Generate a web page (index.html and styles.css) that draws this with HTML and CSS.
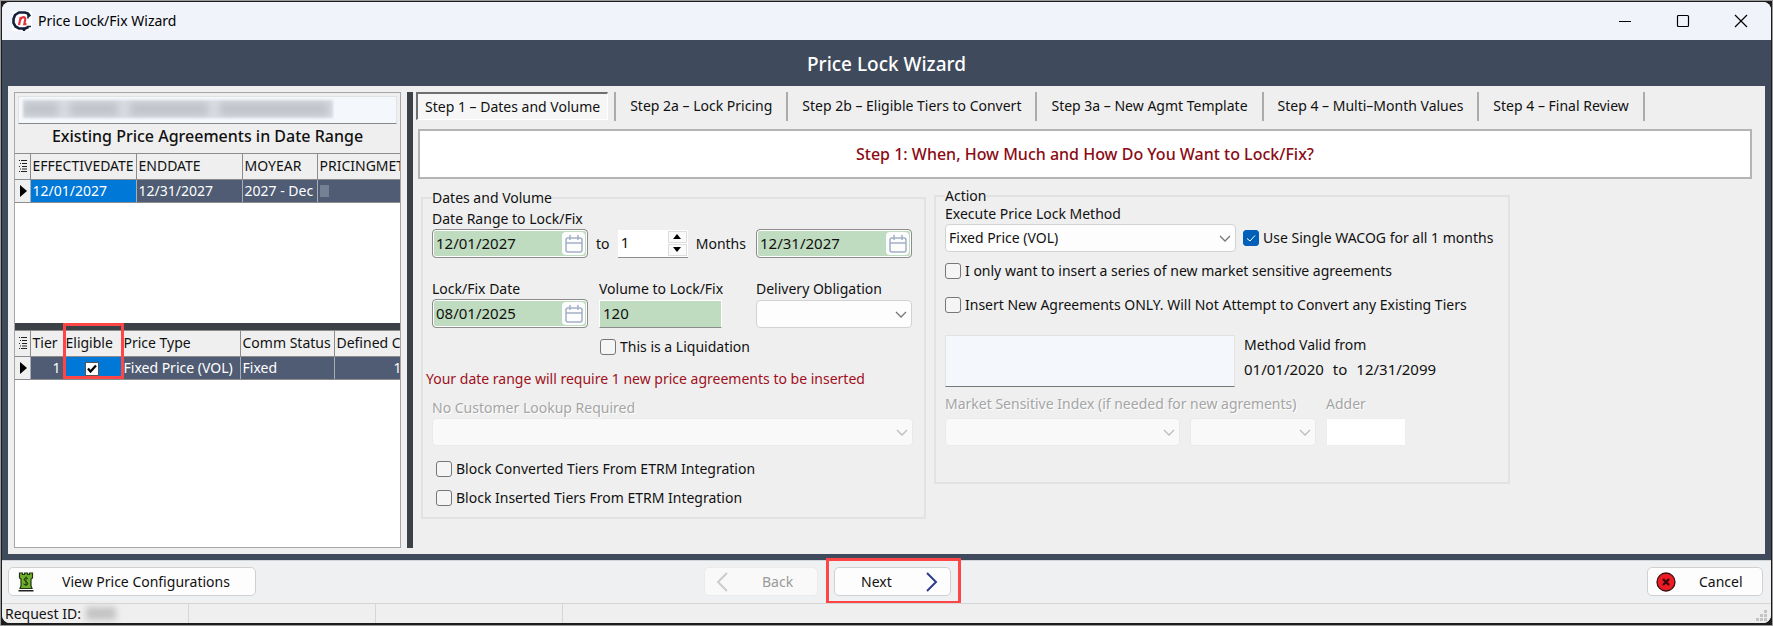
FILE: index.html
```html
<!DOCTYPE html>
<html lang="en">
<head>
<meta charset="utf-8">
<title>Price Lock/Fix Wizard</title>
<link rel="stylesheet" href="styles.css">
</head>
<body>
<div class="window">
  <header class="titlebar">
    <svg class="app-icon" viewBox="0 0 20 20" aria-hidden="true">
      <rect width="20" height="20" fill="#fff"/>
      <path d="M18 5.500L16 2.500L13 1.500H7L3 4L1.500 8V12L3.500 15.500L7 17.500H13L16.500 16" fill="none" stroke="#14203a" stroke-width="2.600"/>
      <path d="M16 3V7.500M15.500 15.500H19M10.500 17L12 20L13.500 17" fill="none" stroke="#14203a" stroke-width="1.600"/>
      <path d="M7 14L8.700 6M8 9Q9.500 6.200 11.800 6.200Q13.600 6.400 13.200 8.500L12.300 13.200H14.500" fill="none" stroke="#e0353c" stroke-width="2.200"/>
    </svg>
    <span class="titlebar-text">Price Lock/Fix Wizard</span>
    <div class="window-controls">
      <button type="button" aria-label="Minimize"><svg viewBox="0 0 12 12"><path d="M0 6.500H12"/></svg></button>
      <button type="button" aria-label="Maximize"><svg viewBox="0 0 12 12"><rect x=".5" y=".5" width="11" height="11" rx="1"/></svg></button>
      <button type="button" aria-label="Close"><svg viewBox="0 0 12 12"><path d="M0 0L12 12M12 0L0 12"/></svg></button>
    </div>
  </header>

  <h1 class="banner">Price Lock Wizard</h1>

  <main class="body">
    <aside class="side">
      <section class="side-top">
        <div class="customer" aria-label="Customer"><div class="redacted"><i></i><i></i><i></i><i></i></div></div>
        <h2>Existing Price Agreements in Date Range</h2>
        <div class="grid-clip">
          <table class="grid agreements">
            <colgroup><col class="c-mark"><col class="c-date"><col class="c-date"><col class="c-moyear"><col class="c-method"></colgroup>
            <thead><tr>
              <th><svg class="menu-icon" viewBox="0 0 8 12"><path d="M0 .5H1M2 .5H8M1 3.500H2M3 3.500H8M0 6.500H1M3 6.500H8M1 9H2M3 9H8M0 11.500H1M2 11.500H8"/></svg></th>
              <th>EFFECTIVEDATE</th><th>ENDDATE</th><th>MOYEAR</th><th>PRICINGMETHOD</th>
            </tr></thead>
            <tbody><tr>
              <td class="mark"><svg viewBox="0 0 7 12"><path d="M0 0L7 6L0 12Z"/></svg></td>
              <td class="focus">12/01/2027</td><td>12/31/2027</td><td>2027 - Dec</td><td><span class="smudge"></span></td>
            </tr></tbody>
          </table>
        </div>
      </section>
      <div class="split-h"></div>
      <section class="side-bottom">
        <div class="eligible-highlight"></div>
        <div class="grid-clip">
          <table class="grid tiers">
            <colgroup><col class="c-mark"><col class="c-tier"><col class="c-eligible"><col class="c-type"><col class="c-status"><col class="c-defined"></colgroup>
            <thead><tr>
              <th><svg class="menu-icon" viewBox="0 0 8 12"><path d="M0 .5H1M2 .5H8M1 3.500H2M3 3.500H8M0 6.500H1M3 6.500H8M1 9H2M3 9H8M0 11.500H1M2 11.500H8"/></svg></th>
              <th>Tier</th><th>Eligible</th><th>Price Type</th><th>Comm Status</th><th>Defined Commodity</th>
            </tr></thead>
            <tbody><tr>
              <td class="mark"><svg viewBox="0 0 7 12"><path d="M0 0L7 6L0 12Z"/></svg></td>
              <td class="num">1</td>
              <td class="focus center"><span class="tick"><input type="checkbox" checked aria-label="Eligible"><svg viewBox="0 0 12 12"><path d="M2 5.500L4.500 8.500L10 2.500"/></svg></span></td>
              <td>Fixed Price (VOL)</td><td>Fixed</td><td class="one">1</td>
            </tr></tbody>
          </table>
        </div>
      </section>
    </aside>
    <div class="split-v"></div>

    <section class="content">
      <nav class="tabs" role="tablist">
        <button type="button" role="tab" class="tab active" aria-selected="true">Step 1 – Dates and Volume</button>
        <button type="button" role="tab" class="tab">Step 2a – Lock Pricing</button>
        <button type="button" role="tab" class="tab">Step 2b – Eligible Tiers to Convert</button>
        <button type="button" role="tab" class="tab">Step 3a – New Agmt Template</button>
        <button type="button" role="tab" class="tab">Step 4 – Multi–Month Values</button>
        <button type="button" role="tab" class="tab">Step 4 – Final Review</button>
      </nav>
      <h2 class="step-title">Step 1: When, How Much and How Do You Want to Lock/Fix?</h2>

      <div class="groups">
        <fieldset class="group dates">
          <legend>Dates and Volume</legend>
          <div class="date-grid">
            <label class="lbl" for="from">Date Range to Lock/Fix</label>
            <div class="date at-from"><input id="from" value="12/01/2027"><button type="button" aria-label="Choose start date"><svg viewBox="0 0 18 18"><use href="#calendar"/></svg></button></div>
            <div class="range">
              <label for="months">to</label>
              <div class="spin"><input id="months" value="1"><div class="spin-buttons"><button type="button" aria-label="More"><svg viewBox="0 0 8 5"><path d="M0 5L4 0L8 5Z"/></svg></button><button type="button" aria-label="Fewer"><svg viewBox="0 0 8 5"><path d="M0 0L4 5L8 0Z"/></svg></button></div></div>
              <span>Months</span>
            </div>
            <div class="date"><input aria-label="End date" value="12/31/2027"><button type="button" aria-label="Choose end date"><svg viewBox="0 0 18 18"><use href="#calendar"/></svg></button></div>
          </div>
          <div class="lock-grid">
            <label class="lbl" for="lockdate">Lock/Fix Date</label>
            <label class="lbl" for="volume">Volume to Lock/Fix</label>
            <label class="lbl" for="delivery">Delivery Obligation</label>
            <div class="date"><input id="lockdate" value="08/01/2025"><button type="button" aria-label="Choose lock date"><svg viewBox="0 0 18 18"><use href="#calendar"/></svg></button></div>
            <input class="volume" id="volume" value="120">
            <div class="combo"><select id="delivery"><option></option></select><svg viewBox="0 0 10 6"><path d="M0 0L5 5L10 0"/></svg></div>
          </div>
          <label class="check liquidation"><input type="checkbox">This is a Liquidation</label>
          <p class="notice">Your date range will require 1 new price agreements to be inserted</p>
          <label class="lbl muted" for="lookup">No Customer Lookup Required</label>
          <div class="combo"><select id="lookup" disabled><option></option></select><svg viewBox="0 0 10 6"><path d="M0 0L5 5L10 0"/></svg></div>
          <div class="blocks">
            <label class="check"><input type="checkbox">Block Converted Tiers From ETRM Integration</label>
            <label class="check"><input type="checkbox">Block Inserted Tiers From ETRM Integration</label>
          </div>
        </fieldset>

        <fieldset class="group action">
          <legend>Action</legend>
          <label class="lbl" for="method">Execute Price Lock Method</label>
          <div class="method-row">
            <div class="combo"><select id="method"><option>Fixed Price (VOL)</option></select><svg viewBox="0 0 10 6"><path d="M0 0L5 5L10 0"/></svg></div>
            <label class="check"><input type="checkbox" checked>Use Single WACOG for all 1 months</label>
          </div>
          <div class="options">
            <label class="check"><input type="checkbox">I only want to insert a series of new market sensitive agreements</label>
            <label class="check"><input type="checkbox">Insert New Agreements ONLY. Will Not Attempt to Convert any Existing Tiers</label>
          </div>
          <div class="memo-row">
            <textarea aria-label="Method description"></textarea>
            <div class="valid"><span>Method Valid from</span><div class="valid-dates"><span>01/01/2020</span><span>to</span><span>12/31/2099</span></div></div>
          </div>
          <div class="index-grid">
            <label class="lbl muted wide" for="index">Market Sensitive Index (if needed for new agrements)</label>
            <label class="lbl muted" for="adder">Adder</label>
            <div class="combo"><select id="index" disabled><option></option></select><svg viewBox="0 0 10 6"><path d="M0 0L5 5L10 0"/></svg></div>
            <div class="combo"><select aria-label="Index period" disabled><option></option></select><svg viewBox="0 0 10 6"><path d="M0 0L5 5L10 0"/></svg></div>
            <input class="adder" id="adder" disabled>
          </div>
        </fieldset>
      </div>
    </section>
  </main>

  <footer class="actions">
    <div class="start">
      <button type="button" class="btn view">
        <svg viewBox="0 0 16 20" aria-hidden="true"><path d="M1.500 1H4.500V2.500H6.500V1H9.500V2.500H11.500V1H14.500V6L13 7V14L14 16.500H2L3 14V7L1.500 6Z" fill="#6fae2c" stroke="#20340f" stroke-width="1.200"/><path d="M10 6.500Q8 5 6.500 6.500T8 9.500T9.500 12.500T5.500 12M8 4.500V14" fill="none" stroke="#20340f"/><path d="M.5 18.800H15.500" stroke="#222" stroke-width="1.400"/></svg>
        <span>View Price Configurations</span>
      </button>
    </div>
    <div class="nav">
      <button type="button" class="btn back" disabled><svg viewBox="0 0 12 20" aria-hidden="true"><path d="M11 1L2 10L11 19"/></svg><span>Back</span></button>
      <div class="next-wrap">
        <button type="button" class="btn next"><span>Next</span><svg viewBox="0 0 12 20" aria-hidden="true"><path d="M1 1L10 10L1 19"/></svg></button>
        <div class="next-highlight"></div>
      </div>
    </div>
    <button type="button" class="btn cancel">
      <svg viewBox="0 0 20 20" aria-hidden="true"><circle cx="10" cy="10" r="9" fill="#ed1c24" stroke="#3a0f12" stroke-width="1.300"/><path d="M7 7L13 13M13 7L7 13" stroke="#3a0508" stroke-width="2.400"/></svg>
      <span>Cancel</span>
    </button>
  </footer>

  <div class="status">
    <div class="cell">Request ID: <span class="redacted-id"></span></div><div class="cell"></div><div class="cell"></div><div class="cell last"></div>
    <svg class="grip" viewBox="0 0 11 11" aria-hidden="true"><path d="M8 0h3v3h-3zM4 4h3v3h-3zM8 4h3v3h-3zM0 8h3v3h-3zM4 8h3v3h-3zM8 8h3v3h-3z"/></svg>
  </div>
</div>

<svg class="defs" aria-hidden="true">
  <symbol id="calendar" viewBox="0 0 18 18"><rect x="1" y="3" width="16" height="14" rx="2"/><path d="M1 8H17M5 0V5M13 0V5"/></symbol>
</svg>
</body>
</html>
```
FILE: styles.css
```css
* { box-sizing: border-box; }

body {
  margin: 0;
  min-height: 100vh;
  display: flex;
  padding: 1px 1px 2px;
  border: 1px solid #9a9a9a;
  background: #1c1c1c;
  font: 14px/16px "Noto Sans", "Open Sans", sans-serif;
  color: #111;
}

button, input, select, textarea { font: inherit; color: inherit; margin: 0; }

.defs { position: absolute; width: 0; height: 0; }

.window {
  flex: 1;
  min-width: 0;
  display: flex;
  flex-direction: column;
  border-radius: 8px;
  overflow: hidden;
  background: #eff0f2;
}

.titlebar {
  display: flex;
  align-items: center;
  height: 38px;
  padding: 0 1px 0 10px;
  background: #f0f3fa;
}
.app-icon { width: 20px; height: 20px; margin-right: 6px; }
.titlebar-text { line-height: 20px; color: #000; }
.window-controls { display: flex; margin-left: auto; }
.window-controls button {
  width: 58px;
  height: 38px;
  padding: 0;
  border: 0;
  background: none;
  display: flex;
  align-items: center;
  justify-content: center;
}
.window-controls svg { width: 12px; height: 12px; fill: none; stroke: #000; stroke-width: 1.2; overflow: visible; }

.banner {
  margin: 0;
  padding: 12px 0 10px;
  background: #3f4a5c;
  color: #fff;
  text-align: center;
  font-size: 19px;
  line-height: 24px;
  font-weight: 500;
}

.body {
  flex: 1;
  display: flex;
  padding: 6px;
  border: 6px solid #3f4a5c;
  border-top: 0;
  background: #efefef;
}

.side {
  flex: 0 0 387px;
  min-width: 0;
  margin-right: 6px;
  display: flex;
  flex-direction: column;
  border: 1px solid #a6a6a6;
}
.side-top { flex: 0 0 230px; display: flex; flex-direction: column; background: #efefef; }
.side-bottom { flex: 1; position: relative; display: flex; flex-direction: column; }
.customer {
  height: 28px;
  margin: 3px 3px 0;
  padding: 3px 4px;
  background: #f4f7fc;
  border: 1px solid #e2e2e2;
  border-bottom-color: #8a8a8a;
}
.redacted { width: 310px; height: 18px; display: flex; gap: 10px; overflow: hidden; background: #dcdfe4; filter: blur(1px); }
.redacted i { height: 14px; margin-top: 2px; background: #bfc2c8; filter: blur(4px); }
.redacted i:nth-child(1) { width: 36px; }
.redacted i:nth-child(2) { width: 50px; }
.redacted i:nth-child(3) { width: 80px; }
.redacted i:nth-child(4) { width: 110px; }

.side h2 {
  margin: 0;
  padding: 1px 0 6px;
  text-align: center;
  font-size: 16px;
  line-height: 22px;
  font-weight: 500;
}
.grid-clip { flex: 1; overflow: hidden; background: #fff; border-top: 1px solid #8c8c8c; }
.grid { border-collapse: collapse; table-layout: fixed; line-height: 18px; white-space: nowrap; }
.agreements { width: 426px; }
.tiers { width: 455px; }
.c-mark { width: 15px; }
.c-date { width: 106px; }
.c-moyear { width: 75px; }
.c-tier { width: 33px; }
.c-eligible { width: 58px; }
.c-type { width: 119px; }
.c-status { width: 94px; }
.grid th {
  height: 25px;
  padding: 0 0 0 2px;
  text-align: left;
  font-weight: 400;
  background: #efefef;
  border-right: 1px solid #8c8c8c;
  border-bottom: 1px solid #8c8c8c;
}
.grid td {
  height: 23px;
  padding: 0 2px;
  color: #fff;
  background: #4f5c73;
  border-right: 1px solid #a9adb5;
  border-bottom: 1px solid #8c8c8c;
}
.grid td.mark { background: #efefef; padding: 0 0 0 5px; }
.mark svg { width: 7px; height: 12px; display: block; }
.grid td.focus { background: #0078d7; }
.grid td.center { text-align: center; }
.grid td.num { text-align: right; }
.grid td.one { padding-left: 59px; }
.menu-icon { width: 8px; height: 12px; display: block; margin-left: 2px; stroke: #222; }
.smudge { display: block; width: 9px; height: 12px; background: #8590a3; opacity: .7; }
.tick { position: relative; display: inline-block; width: 14px; height: 14px; vertical-align: middle; }
.tick input { appearance: none; display: block; width: 14px; height: 14px; background: #fff; border: 1px solid #555; }
.tick svg { position: absolute; left: 1px; top: 1px; width: 12px; height: 12px; fill: none; stroke: #000; stroke-width: 2.2; }
.eligible-highlight { position: absolute; z-index: 1; left: 48px; top: -7px; width: 61px; height: 56px; border: 3px solid #ff4545; }

.split-h { flex: none; height: 7px; background: #3c4148; }
.split-v { flex: none; width: 6px; background: #3c4148; }

.content { flex: 1; min-width: 0; display: flex; flex-direction: column; padding: 0 5px 0 3px; }

.tabs { display: flex; align-items: stretch; height: 29px; }
.tab { padding: 0 14px 2px; border: 0; border-right: 2px solid #ababab; background: none; white-space: nowrap; }
.tab.active {
  margin: 0 6px 1px 0;
  padding: 0 7px;
  background: #f6f6f6;
  border: 1px solid #fff;
  border-top: 2px solid #6f6f6f;
  border-left: 2px solid #6f6f6f;
}
.tab.active + .tab { border-left: 2px solid #ababab; }

.step-title {
  margin: 8px 2px 0;
  padding: 13px 0;
  background: #fff;
  border: 2px solid #b4b4b4;
  color: #8b0a14;
  text-align: center;
  font-size: 16px;
  line-height: 20px;
  font-weight: 500;
}

.groups { display: flex; align-items: flex-start; gap: 8px; padding: 9px 0 0 5px; }
.group { min-width: 0; margin: 0; padding: 0 9px; border: 2px solid #e2e2e2; }
.group legend { padding: 0; line-height: 16px; }
.dates { flex: 0 1 505px; padding-bottom: 10px; margin-top: 2px; }
.action { flex: 0 1 576px; padding-bottom: 36px; }
.lbl { display: block; line-height: 20px; white-space: nowrap; }
.muted { color: #a5a5a5; text-shadow: 1px 1px #fff; }

.date-grid, .lock-grid { display: grid; grid-template-columns: 156px 1fr 156px; align-items: center; padding: 3px 3px 0 0; }
.date-grid .lbl { grid-column: 1 / -1; }
.date-grid .at-from { grid-column: 1; }
.lock-grid { column-gap: 11px; padding-top: 21px; }

.date {
  display: flex;
  height: 29px;
  padding: 2px;
  background: #c0dcc0;
  border: 1px solid #8c8c8c;
  border-radius: 4px;
  box-shadow: inset 0 0 0 1px #fff;
}
.date input { flex: 1; min-width: 0; padding: 0 1px 2px; border: 0; background: none; font-size: 15px; }
.date button { width: 23px; padding: 0; border: 0; border-radius: 4px; background: #fcfcfc; display: flex; align-items: center; justify-content: center; }
.date svg { width: 18px; height: 18px; fill: none; stroke: #a3b0c6; stroke-width: 1.5; }

.range { display: flex; align-items: center; justify-content: space-between; padding: 0 10px 0 8px; }
.spin { display: flex; width: 70px; height: 28px; background: #fff; border-bottom: 1px solid #8c8c8c; }
.spin input { flex: 1; min-width: 0; padding: 0 3px 2px; border: 0; background: none; font-size: 15px; }
.spin-buttons { display: flex; flex-direction: column; gap: 1px; width: 20px; padding: 1px 1px 1px 0; }
.spin-buttons button { flex: 1; padding: 0; border: 1px solid #ddd; background: #fafafa; display: flex; align-items: center; justify-content: center; }
.spin-buttons svg { width: 8px; height: 5px; }

.volume { width: 123px; height: 28px; padding: 0 3px 2px; background: #c0dcc0; border: 1px solid #fff; border-bottom-color: #8c8c8c; font-size: 15px; }

.combo { position: relative; height: 28px; }
.combo select {
  appearance: none;
  width: 100%;
  height: 28px;
  padding: 0 24px 1px 3px;
  background: #fdfdfd;
  border: 1px solid #d2d2d2;
  border-radius: 4px;
}
.combo svg { position: absolute; right: 6px; top: 12px; width: 10px; height: 6px; fill: none; stroke: #777; stroke-width: 1.3; overflow: visible; pointer-events: none; }
.combo select:disabled { background: #f9f9f9; border-color: #eaeaea; opacity: 1; }
.combo select:disabled + svg { stroke: #bcbcbc; }

.check { display: flex; align-items: center; gap: 4px; line-height: 18px; white-space: nowrap; }
.check input { appearance: none; flex: none; width: 16px; height: 16px; background: #f5f5f5; border: 1px solid #777; border-radius: 3px; }
.check input:checked {
  border-color: #005fb8;
  background: #005fb8 url("data:image/svg+xml,%3Csvg xmlns='http://www.w3.org/2000/svg' viewBox='0 0 14 14'%3E%3Cpath d='M3 7.500L6 10L11 4.500' fill='none' stroke='white'/%3E%3C/svg%3E");
}
.liquidation { margin: 10px 0 0 168px; }
.notice { margin: 14px -9px 0 -6px; line-height: 18px; color: #a0101c; white-space: nowrap; }
.dates > .muted { margin-top: 10px; }
.dates > .combo { margin-right: 2px; }
.blocks { display: flex; flex-direction: column; gap: 11px; padding: 14px 0 0 4px; }

.action > .lbl { line-height: 18px; margin-top: 1px; }
.method-row { display: flex; align-items: center; gap: 7px; padding-top: 1px; }
.method-row .combo { width: 291px; }
.options { display: flex; flex-direction: column; gap: 16px; padding-top: 10px; }
.memo-row { display: flex; gap: 9px; padding-top: 21px; }
.memo-row textarea { width: 290px; height: 52px; resize: none; background: #f4f7fc; border: 1px solid #e2e2e2; border-bottom: 1px solid #777; }
.valid { display: flex; flex-direction: column; gap: 8px; line-height: 16px; padding-top: 2px; }
.valid-dates { display: flex; gap: 9px; font-size: 15px; }
.index-grid { display: grid; grid-template-columns: 235px 126px 80px; column-gap: 10px; padding-top: 8px; }
.index-grid .lbl { line-height: 18px; margin-bottom: 5px; }
.index-grid .wide { grid-column: 1 / 3; }
.adder { width: 100%; height: 28px; background: #fff; border: 1px solid #eee; }

.actions { display: grid; grid-template-columns: calc(40% - 6px) auto 1fr; align-items: center; padding: 6px 8px 7px 6px; border-top: 1px solid #cfd3da; }
.btn { display: flex; align-items: center; height: 29px; padding: 0 10px; background: #fdfdfd; border: 1px solid #d0d0d0; border-radius: 5px; white-space: nowrap; }
.view { width: 248px; padding: 0 9px; }
.view svg { width: 16px; height: 20px; margin-right: 28px; }
.nav { display: flex; gap: 16px; }
.back { width: 114px; padding: 0 11px; background: #f9f9f9; border-color: #ebebeb; color: #999; }
.back svg { width: 12px; height: 20px; margin-right: 34px; fill: none; stroke: #ccc; stroke-width: 2; }
.next-wrap { position: relative; }
.next { width: 117px; padding: 0 12px 0 26px; justify-content: space-between; }
.next svg { width: 12px; height: 20px; fill: none; stroke: #2f3b8c; stroke-width: 2; }
.next-highlight { position: absolute; left: -8px; top: -9px; width: 135px; height: 46px; border: 3px solid #ff4545; pointer-events: none; }
.cancel { justify-self: end; width: 116px; padding: 0 8px; }
.cancel svg { width: 20px; height: 20px; margin-right: 23px; }

.status { position: relative; display: flex; height: 20px; background: #efefef; border-top: 1px solid #d6d6d6; line-height: 20px; }
.cell { flex: 0 0 187px; display: flex; align-items: center; padding-left: 3px; border-right: 1px solid #d6d6d6; }
.cell.last { flex: 1; border: 0; }
.redacted-id { width: 30px; height: 13px; margin-left: 5px; background: #c4c4c4; filter: blur(3px); }
.grip { position: absolute; right: 4px; bottom: 2px; width: 11px; height: 11px; fill: #c4c4c4; }
```
